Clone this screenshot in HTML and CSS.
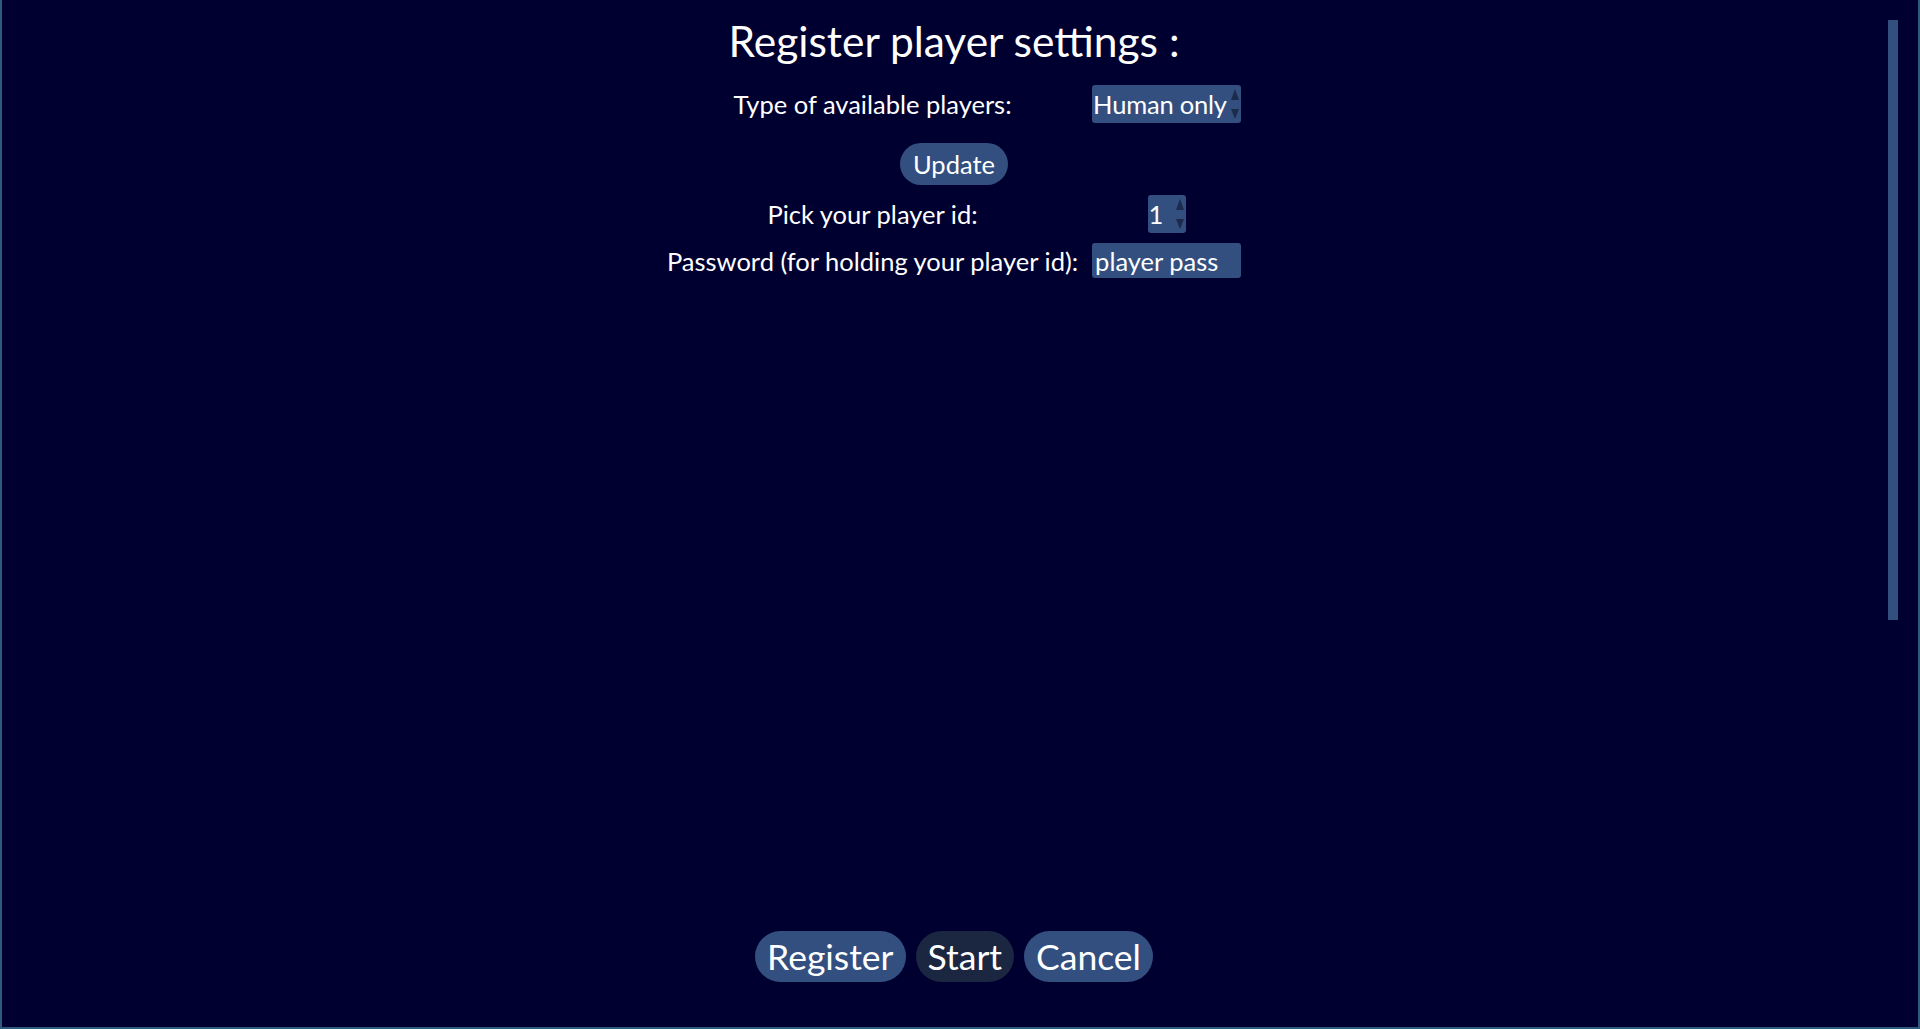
FILE: index.html
```html
<!DOCTYPE html>
<html lang="en">
<head>
<meta charset="utf-8">
<title>Register player settings</title>
<link rel="stylesheet" href="styles.css">
</head>
<body>
<div class="frame">
  <main class="content">
    <h1 class="title">Register player settings :</h1>
    <div class="form">
      <label class="label">Type of available players:</label>
      <div class="field select">
        <span class="value">Human only</span>
        <svg class="spin" width="8" height="30" viewBox="0 0 8 30"><polygon points="4,0 8,11 0,11"/><polygon points="0,20 8,20 4,30"/></svg>
      </div>
      <button class="pill update">Update</button>
      <label class="label">Pick your player id:</label>
      <div class="field number">
        <span class="value">1</span>
        <svg class="spin" width="8" height="30" viewBox="0 0 8 30"><polygon points="4,0 8,11 0,11"/><polygon points="0,20 8,20 4,30"/></svg>
      </div>
      <label class="label">Password (for holding your player id):</label>
      <div class="field text"><span class="value">player pass</span></div>
    </div>
    <div class="actions">
      <button class="pill big">Register</button>
      <button class="pill big dark">Start</button>
      <button class="pill big">Cancel</button>
    </div>
  </main>
  <div class="scroll-thumb"></div>
</div>
</body>
</html>
```
FILE: styles.css
```css
html, body {
  margin: 0;
  padding: 0;
  height: 100%;
}
body {
  background: #000030;
  color: #ffffff;
  font-family: Lato, "Noto Sans", sans-serif;
  overflow: hidden;
}
.frame {
  position: relative;
  box-sizing: border-box;
  height: 1029px;
  border-left: 2px solid #2d5b7e;
  border-right: 2px solid #2d5b7e;
  border-bottom: 2px solid #2d5b7e;
  display: flex;
}
.content {
  flex: 1;
  display: flex;
  flex-direction: column;
  align-items: center;
  padding: 16px 12px 45px 0;
}
.title {
  margin: 0;
  font-size: 42.5px;
  font-weight: 400;
  line-height: 50px;
}
.form {
  margin-top: 19px;
  display: grid;
  grid-template-columns: auto 149px;
  column-gap: 14px;
  row-gap: 10px;
  align-items: center;
  font-size: 25.5px;
}
.label {
  text-align: center;
  line-height: 32px;
  white-space: nowrap;
}
.field {
  box-sizing: border-box;
  background: #334f80;
  border-radius: 3px;
  display: flex;
  align-items: center;
  justify-self: center;
  line-height: 32px;
  white-space: nowrap;
  overflow: hidden;
}
.select {
  width: 149px;
  height: 38px;
  padding: 0 2px 0 1px;
  justify-content: space-between;
}
.select .value {
  letter-spacing: -0.2px;
}
.number {
  width: 38px;
  height: 38px;
  padding: 0 2px 0 1px;
  justify-content: space-between;
}
.text {
  width: 149px;
  height: 35px;
  padding: 0 3px;
}
.spin {
  fill: #1c2b4b;
  flex: none;
}
.pill {
  font-family: inherit;
  color: #ffffff;
  background: #334f80;
  border: none;
  border-radius: 999px;
  cursor: pointer;
}
.update {
  grid-column: 1 / -1;
  justify-self: center;
  margin: 10px 0 0;
  font-size: 25.5px;
  line-height: 32px;
  height: 42px;
  padding: 0 13px;
}
.actions {
  margin-top: auto;
  display: flex;
  gap: 10px;
}
.big {
  font-size: 35.5px;
  line-height: 42px;
  height: 51px;
  padding: 0 12px;
}
.dark {
  background: #1b2740;
}
.scroll-thumb {
  position: absolute;
  top: 20px;
  right: 20px;
  width: 10px;
  height: 600px;
  background: #334f80;
}
```
